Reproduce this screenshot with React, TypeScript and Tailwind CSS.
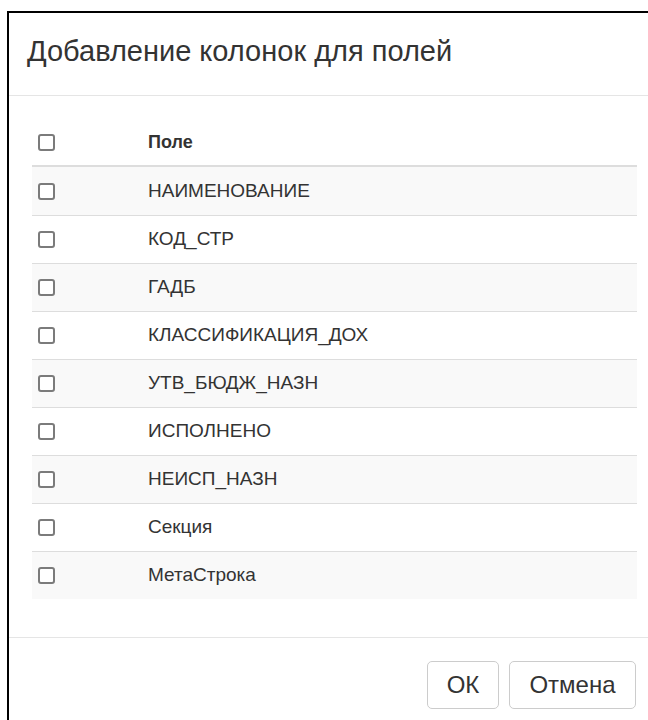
import React, { useState } from 'react';

const FIELDS = [
  'НАИМЕНОВАНИЕ',
  'КОД_СТР',
  'ГАДБ',
  'КЛАССИФИКАЦИЯ_ДОХ',
  'УТВ_БЮДЖ_НАЗН',
  'ИСПОЛНЕНО',
  'НЕИСП_НАЗН',
  'Секция',
  'МетаСтрока',
];

function Checkbox({ checked, onChange }: { checked: boolean; onChange: () => void }) {
  return (
    <button
      type="button"
      onClick={onChange}
      className="w-[17px] h-[17px] rounded-[3px] border-2 border-[#7b7b7b] bg-white flex items-center justify-center"
    >
      {checked && (
        <svg width="11" height="11" viewBox="0 0 12 12">
          <path d="M2 6.5l2.5 2.5L10 3" stroke="#333" strokeWidth="2" fill="none" />
        </svg>
      )}
    </button>
  );
}

export default function App() {
  const [selected, setSelected] = useState<Record<string, boolean>>({});
  const allChecked = FIELDS.every((f) => selected[f]);

  function toggle(field: string) {
    setSelected((prev) => ({ ...prev, [field]: !prev[field] }));
  }

  function toggleAll() {
    const next: Record<string, boolean> = {};
    FIELDS.forEach((f) => (next[f] = !allChecked));
    setSelected(next);
  }

  return (
    <div
      className="w-[648px] h-[720px] overflow-hidden bg-white pl-[7px] pt-[11px] text-[#333]"
      style={{ fontFamily: '"Liberation Sans", Arial, sans-serif' }}
    >
      <div className="h-full border-l-2 border-t-2 border-black flex flex-col">
        {/* header */}
        <div className="h-[83px] shrink-0 border-b border-[#e5e5e5] pl-[18px] pt-[20px]">
          <h4 className="text-[29px] leading-[36px]">Добавление колонок для полей</h4>
        </div>

        {/* body */}
        <div className="h-[541px] shrink-0 pl-[23px] pr-[11px] pt-[23px]">
          <div className="flex items-center h-[48px] border-b-2 border-[#ddd]">
            <div className="w-[116px] pl-[6px] flex items-center">
              <Checkbox checked={allChecked} onChange={toggleAll} />
            </div>
            <span className="text-[18px] font-bold">Поле</span>
          </div>
          {FIELDS.map((field, i) => (
            <div
              key={field}
              className={`flex items-center h-[48px] ${i > 0 ? 'border-t border-[#ddd]' : ''} ${
                i % 2 === 0 ? 'bg-[#f9f9f9]' : 'bg-white'
              }`}
            >
              <div className="w-[116px] pl-[6px] flex items-center">
                <Checkbox checked={!!selected[field]} onChange={() => toggle(field)} />
              </div>
              <span className="text-[19px]">{field}</span>
            </div>
          ))}
        </div>

        {/* footer */}
        <div className="flex-1 border-t border-[#e5e5e5] flex justify-end gap-[10px] pt-[23px] pr-[12px]">
          <button className="w-[72px] h-[48px] rounded-[5px] border border-[#ccc] bg-white text-[24px]">
            ОК
          </button>
          <button className="w-[127px] h-[48px] rounded-[5px] border border-[#ccc] bg-white text-[24px]">
            Отмена
          </button>
        </div>
      </div>
    </div>
  );
}
